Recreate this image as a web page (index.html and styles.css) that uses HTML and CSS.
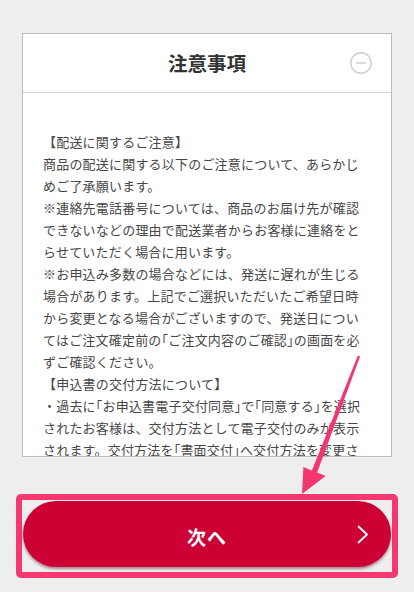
FILE: index.html
```html
<!DOCTYPE html>
<html lang="ja">
<head>
<meta charset="utf-8">
<title>注意事項</title>
<link rel="stylesheet" href="styles.css">
</head>
<body>
<div class="page">
  <section class="card">
    <header class="card-head">
      <span></span>
      <h1 class="card-title">注意事項</h1>
      <svg class="toggle" width="22" height="22" viewBox="0 0 22 22" aria-hidden="true">
        <circle cx="11" cy="11" r="10.2" fill="none" stroke="#cfcfcf" stroke-width="1.5"/>
        <line x1="6" y1="11" x2="16" y2="11" stroke="#cfcfcf" stroke-width="1.5"/>
      </svg>
    </header>
    <div class="card-body">
      <p class="notes">【配送に関するご注意】<br>商品の配送に関する以下のご注意について、あらかじ<br>めご了承願います。<br>※連絡先電話番号については、商品のお届け先が確認<br>できないなどの理由で配送業者からお客様に連絡をと<br>らせていただく場合に用います。<br>※お申込み多数の場合などには、発送に遅れが生じる<br>場合があります。上記でご選択いただいたご希望日時<br>から変更となる場合がございますので、発送日につい<br>てはご注文確定前の<span class="h">「</span>ご注文内容のご確認<span class="h">」</span>の画面を必<br>ずご確認ください。<br>【申込書の交付方法について】<br>・過去に<span class="h">「</span>お申込書電子交付同意<span class="h">」</span>で<span class="h">「</span>同意する<span class="h">」</span>を選択<br>されたお客様は、交付方法として電子交付のみが表示<br>されます。交付方法を<span class="h">「</span>書面交付<span class="h">」</span>へ交付方法を変更さ<br>れる場合は、お手続きください。</p>
    </div>
  </section>
  <div class="highlight">
    <button class="next-btn" type="button">
      <span></span>
      <span class="next-label">次へ</span>
      <svg class="chev" width="12" height="19" viewBox="0 0 12 19" aria-hidden="true">
        <polyline points="1.5,1.5 10,9.5 1.5,17.5" fill="none" stroke="#fff" stroke-width="1.8" stroke-linecap="round" stroke-linejoin="round"/>
      </svg>
    </button>
  </div>
</div>
<svg class="annot" width="414" height="592" viewBox="0 0 414 592" aria-hidden="true">
  <polygon points="360.1,356.5 317.1,472.6 325.6,476.1 302,494 303.4,466.9 311.9,470.4 357.9,355.5" fill="#f4366f"/>
</svg>
</body>
</html>
```

FILE: styles.css
```css
html, body {
  margin: 0;
  padding: 0;
}
body {
  background: #eeeeee;
  font-family: "Noto Sans CJK JP", "Noto Sans", sans-serif;
  width: 414px;
  height: 592px;
  overflow: hidden;
  position: relative;
}
.page {
  padding: 33px 16px 0;
  display: flex;
  flex-direction: column;
}
.card {
  margin: 0 6px;
  background: #ffffff;
  border: 1px solid #bcbcbc;
  display: flex;
  flex-direction: column;
}
.card-head {
  height: 58px;
  border-bottom: 1px solid #d4d4d4;
  display: grid;
  grid-template-columns: 1fr auto 1fr;
  align-items: center;
}
.card-title {
  margin: 0;
  font-size: 19.5px;
  font-weight: 700;
  color: #333333;
  letter-spacing: 0;
  line-height: 1;
}
.toggle {
  justify-self: end;
  margin-right: 19px;
  display: block;
}
.card-body {
  height: 325px;
  overflow: hidden;
  padding: 38px 20px 0;
}
.notes {
  margin: 0;
  font-size: 13px;
  letter-spacing: 0.2px;
  line-height: 22px;
  color: #474747;
  white-space: nowrap;
}
.h {
  font-feature-settings: "halt";
}
.highlight {
  margin-top: 37px;
  border: 6px solid #f5386f;
  border-radius: 5px;
  padding: 1px 1px 5px;
  background: #eeeeee;
}
.next-btn {
  width: 100%;
  height: 66px;
  border: 0;
  border-radius: 33px;
  background: #cc0035;
  box-shadow: 0 2px 3px rgba(80, 0, 20, 0.45);
  display: grid;
  grid-template-columns: 1fr auto 1fr;
  align-items: center;
  padding: 0;
  font-family: inherit;
  cursor: pointer;
}
.next-label {
  color: #ffffff;
  font-size: 19px;
  font-weight: 700;
  letter-spacing: 1px;
  line-height: 1;
  padding-top: 4px;
}
.chev {
  justify-self: end;
  margin-right: 22px;
  display: block;
}
.annot {
  position: absolute;
  top: 0;
  left: 0;
  pointer-events: none;
}
```
